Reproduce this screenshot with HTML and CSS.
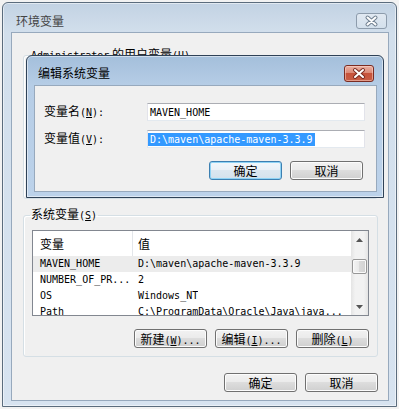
FILE: index.html
```html
<!DOCTYPE html>
<html lang="zh-CN">
<head>
    <meta charset="UTF-8">
    <meta name="viewport" content="width=device-width, initial-scale=1.0">
    <title>环境变量</title>
    <link rel="stylesheet" href="styles.css">
</head>
<body>
    <!-- background window: 环境变量 -->
    <div class="window outer">
        <div class="titlebar">
            <span class="title">环境变量</span>
            <span class="close close-gray">
                <svg width="29" height="14" viewBox="0 0 29 14">
                    <path d="M10.5 3.5 L18.5 10.5 M18.5 3.5 L10.5 10.5" stroke="#6f7f8f" stroke-width="4" stroke-linecap="round"/>
                    <path d="M10.5 3.5 L18.5 10.5 M18.5 3.5 L10.5 10.5" stroke="#fff" stroke-width="2" stroke-linecap="round"/>
                </svg>
            </span>
        </div>
        <div class="client">
            <fieldset class="group user-group">
                <legend><span class="m">Administrator</span> 的用户变量<span class="m">(<u>U</u>)</span></legend>
                <div class="hidden-list"></div>
            </fieldset>

            <fieldset class="group sys-group">
                <legend>系统变量<span class="m">(<u>S</u>)</span></legend>
                <div class="listview">
                    <div class="lv-body">
                        <div class="lv-head">
                            <span class="c1">变量</span><span class="c2">值</span>
                        </div>
                        <div class="lv-row sel">
                            <span class="c1 m">MAVEN_HOME</span><span class="c2 m">D:\maven\apache-maven-3.3.9</span>
                        </div>
                        <div class="lv-row">
                            <span class="c1 m">NUMBER_OF_PR...</span><span class="c2 m">2</span>
                        </div>
                        <div class="lv-row">
                            <span class="c1 m">OS</span><span class="c2 m">Windows_NT</span>
                        </div>
                        <div class="lv-row">
                            <span class="c1 m">Path</span><span class="c2 m">C:\ProgramData\Oracle\Java\java...</span>
                        </div>
                    </div>
                    <div class="vscroll">
                        <div class="sb-btn">
                            <svg width="7" height="4" viewBox="0 0 7 4"><path d="M0 4 L3.5 0 L7 4 Z" fill="#555"/></svg>
                        </div>
                        <div class="sb-track"><div class="sb-thumb"></div></div>
                        <div class="sb-btn">
                            <svg width="7" height="4" viewBox="0 0 7 4"><path d="M0 0 L3.5 4 L7 0 Z" fill="#555"/></svg>
                        </div>
                    </div>
                </div>
                <div class="btn-row">
                    <button class="btn">新建<span class="m">(<u>W</u>)...</span></button>
                    <button class="btn">编辑<span class="m">(<u>I</u>)...</span></button>
                    <button class="btn">删除<span class="m">(<u>L</u>)</span></button>
                </div>
            </fieldset>

            <div class="btn-row main-btns">
                <button class="btn">确定</button>
                <button class="btn">取消</button>
            </div>
        </div>
    </div>

    <!-- modal: 编辑系统变量 -->
    <div class="window dialog">
        <div class="titlebar">
            <span class="title">编辑系统变量</span>
            <span class="close close-red">
                <svg width="28" height="15" viewBox="0 0 28 15">
                    <path d="M10 4 L18 11 M18 4 L10 11" stroke="#7a2b20" stroke-width="4" stroke-linecap="round"/>
                    <path d="M10 4 L18 11 M18 4 L10 11" stroke="#fff" stroke-width="2" stroke-linecap="round"/>
                </svg>
            </span>
        </div>
        <div class="client dlg-client">
            <div class="form-row">
                <span class="label">变量名<span class="m">(<u>N</u>):</span></span>
                <div class="field"><span class="val m">MAVEN_HOME</span></div>
            </div>
            <div class="form-row">
                <span class="label">变量值<span class="m">(<u>V</u>):</span></span>
                <div class="field"><span class="val m selected">D:\maven\apache-maven-3.3.9</span></div>
            </div>
            <div class="btn-row dlg-btns">
                <button class="btn default">确定</button>
                <button class="btn">取消</button>
            </div>
        </div>
    </div>
</body>
</html>
```

FILE: styles.css
```css
body {
    margin: 0;
    height: 409px;
    overflow: hidden;
    position: relative;
    background: #f2f2f2;
    font-family: "Noto Sans CJK SC", sans-serif;
    font-size: 12px;
    line-height: 16px;
    color: #000;
}
.m {
    font-family: "DejaVu Sans Mono", "Liberation Mono", monospace;
    font-size: 10px;
}
u {
    text-underline-offset: 1px;
}

/* window frames */
.window {
    box-sizing: border-box;
    border: 1px solid #5b6c7d;
    border-radius: 6px 6px 0 0;
    display: flex;
    flex-direction: column;
    box-shadow: inset 0 0 0 1px rgba(255, 255, 255, 0.5);
}
.outer {
    margin: 2px 0 0 2px;
    width: 395px;
    height: 405px;
    padding: 0 7px 5px 8px;
    background: linear-gradient(#c2d2e3, #d2dfec 30px, #d7e3f0);
}
.dialog {
    position: absolute;
    left: 26px;
    top: 55px;
    width: 358px;
    height: 143px;
    padding: 0 6px 5px 7px;
    border-color: #2f4257;
    background: linear-gradient(#a4bfdb, #b6cde6 30px, #bcd2ea);
}
.titlebar {
    box-sizing: border-box;
    height: 29px;
    flex: none;
    display: flex;
    justify-content: space-between;
    align-items: flex-start;
}
.outer .titlebar {
    padding: 10px 2px 0 5px;
}
.dialog .titlebar {
    padding: 9px 3px 0 4px;
}
.title {
    line-height: 16px;
}
.outer .title {
    color: #444;
}
.close {
    box-sizing: border-box;
    display: flex;
    border-radius: 3px;
}
.close-gray {
    width: 31px;
    height: 16px;
    border: 1px solid #8d9cac;
    background: linear-gradient(rgba(255, 255, 255, 0.45), rgba(255, 255, 255, 0.1));
}
.close-red {
    width: 30px;
    height: 17px;
    border: 1px solid #7b2c22;
    background: linear-gradient(#eab0a2, #dc8a77 45%, #c7523a 50%, #c75d45);
    box-shadow: inset 0 0 0 1px rgba(255, 220, 210, 0.5);
}

.client {
    flex: 1;
    display: flex;
    flex-direction: column;
    background: #f0f0f0;
    border: 1px solid #97a9bd;
}

/* group boxes */
.group {
    margin: 0 10px 0 11px;
    padding: 7px 8px 8px 8px;
    border: 1px solid #d5dfe5;
    border-radius: 3px;
    box-shadow: inset 1px 1px #fff;
    min-width: 0;
}
.group legend {
    padding: 0 1px;
    margin-left: -2px;
    line-height: 14px;
}
.user-group {
    margin-top: 14px;
}
.hidden-list {
    height: 120px;
}
.sys-group {
    margin-top: 8px;
}

/* list view */
.listview {
    box-sizing: border-box;
    height: 86px;
    border: 1px solid #828790;
    background: #fff;
    display: flex;
    overflow: hidden;
}
.lv-body {
    flex: 1;
    min-width: 0;
    overflow: hidden;
}
.lv-head {
    height: 25px;
    box-sizing: border-box;
    padding-top: 3px;
    display: flex;
    white-space: nowrap;
}
.lv-head .c1 {
    border-right: 1px solid #e3e6ea;
    margin-top: -3px;
    padding-top: 3px;
}
.lv-head span {
    line-height: 20px;
}
.lv-row {
    height: 16px;
    display: flex;
    white-space: nowrap;
    line-height: 16px;
}
.lv-row.sel {
    background: #ececec;
}
.c1 {
    box-sizing: border-box;
    width: 100px;
    flex: none;
    padding-left: 7px;
    overflow: hidden;
}
.c2 {
    padding-left: 5px;
    overflow: hidden;
}
.vscroll {
    width: 17px;
    flex: none;
    display: flex;
    flex-direction: column;
    background: linear-gradient(90deg, #e4e4e4, #f2f2f2 25%, #f2f2f2 75%, #e4e4e4);
}
.sb-btn {
    height: 17px;
    flex: none;
    display: flex;
    align-items: center;
    justify-content: center;
}
.sb-track {
    flex: 1;
}
.sb-thumb {
    box-sizing: border-box;
    margin: 11px 1px 0;
    height: 15px;
    border: 1px solid #979797;
    border-radius: 2px;
    background: linear-gradient(90deg, #f4f4f4, #e8e8e8 50%, #dadada 50%, #d2d2d2);
    box-shadow: inset 0 0 0 1px #fafafa;
}

/* buttons */
.btn-row {
    display: flex;
    justify-content: flex-end;
    gap: 8px;
}
.sys-group .btn-row {
    margin-top: 13px;
}
.main-btns {
    margin: 16px 10px 0 0;
}
.btn {
    box-sizing: border-box;
    width: 73px;
    height: 19px;
    padding: 0;
    font: inherit;
    line-height: 17px;
    color: #000;
    border: 1px solid #707070;
    border-radius: 3px;
    background: linear-gradient(#f2f2f2, #ebebeb 45%, #dddddd 50%, #cfcfcf);
    box-shadow: inset 0 0 0 1px #fcfcfc;
}
.btn.default {
    border-color: #3c7fb1;
    box-shadow: inset 0 0 0 1px #8fd3f5;
    background: linear-gradient(#f2f7fb, #eaf1f7 45%, #dce7f0 50%, #d3e1ec);
}

/* edit dialog form */
.dlg-client {
    padding: 17px 11px 0 9px;
}
.form-row {
    display: flex;
    align-items: center;
    margin-bottom: 9px;
}
.label {
    width: 103px;
    flex: none;
}
.field {
    box-sizing: border-box;
    width: 218px;
    height: 18px;
    display: flex;
    align-items: center;
    background: #fff;
    border: 1px solid #e2e3ea;
    border-top-color: #abadb3;
    border-bottom-color: #e3e9ef;
}
.val {
    padding: 0 2px;
    line-height: 13px;
}
.val.selected {
    background: #3399ff;
    color: #fff;
}
.dlg-btns {
    margin: 4px 2px 0 0;
}
```
